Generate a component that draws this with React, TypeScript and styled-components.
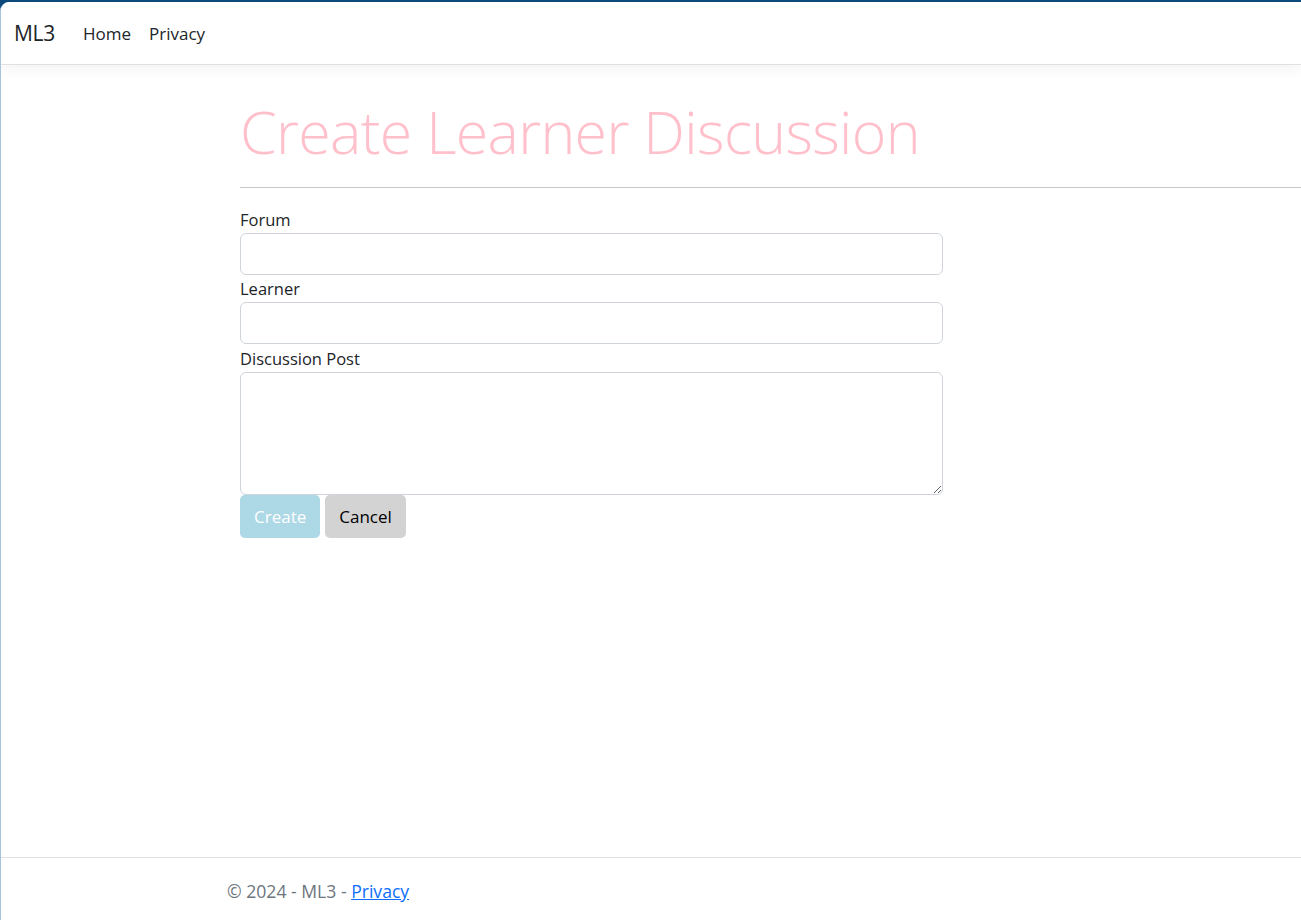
import React from "react";
import styled, { createGlobalStyle } from "styled-components";

const Global = createGlobalStyle`
  html, body { margin: 0; padding: 0; height: 100%; }
  body { background: #0c4a7c; font-family: "Open Sans", "Noto Sans", sans-serif; }
  #root { height: 100%; }
  * { box-sizing: border-box; }
`;

const Frame = styled.div`
  height: 920px;
  padding-top: 2px;
  background: #0c4a7c;
`;

const Page = styled.div`
  height: 100%;
  background: #fff;
  border-top-left-radius: 9px;
  border-left: 1px solid #a8c3db;
  display: flex;
  flex-direction: column;
  overflow: hidden;
`;

const NavBar = styled.nav`
  height: 63px;
  flex-shrink: 0;
  display: flex;
  align-items: center;
  padding: 0 13px;
  border-bottom: 1px solid #dfe2e5;
  box-shadow: 0 4px 13px rgba(0, 0, 0, 0.05);
  background: #fff;
  position: relative;
  z-index: 1;
`;

const Brand = styled.a`
  font-size: 21px;
  color: #212529;
  text-decoration: none;
  margin-right: 19px;
  letter-spacing: -0.3px;
`;

const NavLink = styled.a`
  font-size: 17px;
  color: #212529;
  text-decoration: none;
  padding: 0 9px;
`;

const Main = styled.main`
  flex: 1;
  padding-top: 29px;
  padding-left: 239px;
  display: flex;
  flex-direction: column;
`;

const Title = styled.h1`
  margin: 0 0 5px 0;
  padding-top: 4px;
  font-size: 59px;
  font-weight: 300;
  line-height: 67px;
  color: pink;
  letter-spacing: -0.65px;
`;

const Rule = styled.hr`
  margin: 17px 0 18px 0;
  border: 0;
  border-top: 1px solid #c6c6c6;
  width: 100%;
`;

const Form = styled.form`
  width: 703px;
  display: flex;
  flex-direction: column;
`;

const Label = styled.label<{ $gap?: number }>`
  font-size: 16.5px;
  line-height: 27px;
  color: #212529;
  display: block;
  height: 27px;
  margin-top: ${(p) => p.$gap ?? 0}px;
`;

const Input = styled.input`
  display: block;
  width: 100%;
  height: 42px;
  border: 1px solid #ced4da;
  border-radius: 6px;
  background: #fff;
  font-size: 16.5px;
  padding: 6px 13px;
  font-family: inherit;
`;

const TextArea = styled.textarea`
  display: block;
  width: 100%;
  height: 123px;
  border: 1px solid #ced4da;
  border-radius: 6px;
  background: #fff;
  font-size: 16.5px;
  padding: 6px 13px;
  font-family: inherit;
  resize: vertical;
`;

const Buttons = styled.div`
  display: flex;
  gap: 5px;
`;

const Button = styled.button<{ $variant: "create" | "cancel" }>`
  height: 43px;
  padding: 0 14px;
  border: 0;
  border-radius: 5px;
  font-family: inherit;
  font-size: 17px;
  background: ${(p) => (p.$variant === "create" ? "#add8e6" : "#d3d3d3")};
  color: ${(p) => (p.$variant === "create" ? "#fff" : "#000")};
  cursor: pointer;
`;

const Footer = styled.footer`
  flex-shrink: 0;
  border-top: 1px solid #dee2e6;
  height: 63px;
  display: flex;
  align-items: center;
  padding-left: 226px;
  padding-top: 4px;
  font-size: 17.6px;
  color: #6c757d;
  white-space: pre;
`;

const FooterLink = styled.a`
  color: #0d6efd;
  text-decoration: underline;
`;

export default function App() {
  return (
    <>
      <Global />
      <Frame>
        <Page>
          <NavBar>
            <Brand href="#">ML3</Brand>
            <NavLink href="#">Home</NavLink>
            <NavLink href="#">Privacy</NavLink>
          </NavBar>
          <Main>
            <Title>Create Learner Discussion</Title>
            <Rule />
            <Form onSubmit={(e) => e.preventDefault()}>
              <Label>Forum</Label>
              <Input type="text" />
              <Label>Learner</Label>
              <Input type="text" />
              <Label $gap={1}>Discussion Post</Label>
              <TextArea />
              <Buttons>
                <Button type="submit" $variant="create">Create</Button>
                <Button type="button" $variant="cancel">Cancel</Button>
              </Buttons>
            </Form>
          </Main>
          <Footer>
            © 2024 - ML3 - <FooterLink href="#">Privacy</FooterLink>
          </Footer>
        </Page>
      </Frame>
    </>
  );
}
